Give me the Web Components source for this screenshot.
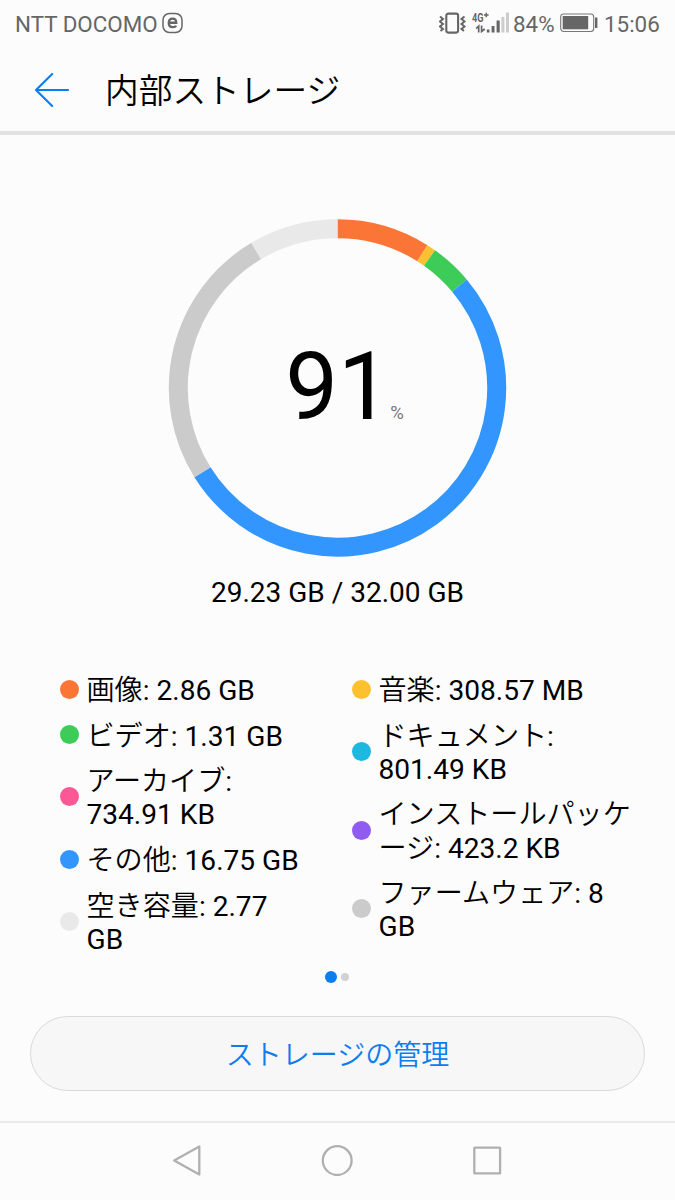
<!DOCTYPE html>
<html lang="ja">
<head>
<meta charset="utf-8">
<title>内部ストレージ</title>
<style>
html,body{margin:0;height:100%;background:#fcfcfc}
body{font-family:Roboto,"Noto Sans CJK JP DemiLight","Noto Sans CJK JP",sans-serif;color:#000;overflow:hidden}
</style>
</head>
<body>
<storage-screen></storage-screen>
<script>
const define = (name, html, setup) => customElements.define(name, class extends HTMLElement {
  constructor() {
    super();
    this.attachShadow({mode: 'open'}).innerHTML = html;
  }
  connectedCallback() { if (setup) setup(this, this.shadowRoot); }
});

define('status-bar', `
<style>
:host{display:flex;box-sizing:border-box;height:46px;padding:0 15px;align-items:center;justify-content:space-between;color:#666;font-size:22.4px;line-height:44px;white-space:nowrap}
.left,.right{display:flex;align-items:center}
.left{gap:4px}
svg{display:block;flex:none}
span{padding-top:1px}
.carrier{width:143px}
.pct{width:41px;margin-left:4px}
.bat{margin-left:6px}
.time{width:56px;margin-left:6px}
</style>
<div class="left"><span class="carrier">NTT DOCOMO</span>
<svg width="21" height="22" viewBox="0 0 21 22" fill="none" stroke="#666"><rect x="1" y="1.5" width="19" height="19" rx="6.5" stroke-width="1.5"/><path d="M6.5 10.8H14.2C14.2 7.7 13 6.6 10.5 6.6S6.8 8.2 6.8 11S8 15.1 10.6 15.1S13.5 14.8 14 13.6" stroke-width="2.4"/></svg></div>
<div class="right">
<svg width="27" height="22" viewBox="0 0 27 22" fill="none" stroke="#666"><rect x="7.3" y="1.6" width="11.8" height="19" rx="2" stroke-width="2.1"/><path d="M1 4.5L4 7L1 9.5L4 12L1 14.5L4 17L1.5 19M25.5 4.5L22.5 7L25.5 9.5L22.5 12L25.5 14.5L22.5 17L25 19" stroke-width="2"/></svg>
<svg width="38" height="24" viewBox="0 0 38 24" style="margin-left:5px" fill="#666"><text x="1" y="10.6" font-size="12.5" font-weight="700" textLength="11.5" lengthAdjust="spacingAndGlyphs">4G</text><path d="M13 4h4.6M15.3 1.7v4.6" stroke="#666" stroke-width="1.5"/><path d="M5.2 17.6L7.7 15V21.5M10.6 14.5V20.5L13.8 18" stroke="#666" stroke-width="1.7" fill="none"/><path d="M15.8 18.6h2.7v2.8h-2.7zM20.6 15h2.9v6.4h-2.9zM25.6 9.5h3.1v11.9h-3.1z"/><path fill="#ccc" d="M30.4 6h3v15.4h-3zM35 1.5h3v19.9h-3z"/></svg>
<span class="pct">84%</span>
<svg class="bat" width="38" height="20" viewBox="0 0 38 20"><rect x=".7" y="1" width="33" height="17.5" rx="3" fill="none" stroke="#777" stroke-width="1.1"/><rect x="2.7" y="3" width="25.5" height="13.3" fill="#666"/><rect x="35" y="4.5" width="2.4" height="10.5" fill="#666"/></svg>
<span class="time">15:06</span></div>`);

define('app-bar', `
<style>
:host{display:flex;box-sizing:border-box;height:89px;padding-left:34px;align-items:center;border-bottom:4px solid #e2e2e2;font-size:33.7px;line-height:48px}
svg{display:block;flex:none;margin:2px 37px 0 0}
span{padding-top:6px;margin-left:-1px}
</style>
<svg width="35" height="36" viewBox="0 0 35 36" fill="none" stroke="#0a7df0" stroke-width="2.1" stroke-linecap="round" stroke-linejoin="round"><path d="M18.2 2L2 18L18.2 34M2 18H34"/></svg>
<span><slot></slot></span>`);

define('usage-ring', `
<style>
:host{display:grid;width:338px;height:338px;margin-left:168px}
svg,.value{grid-area:1/1}
.value{display:flex;justify-content:center;align-items:baseline;align-self:center;line-height:112px;padding:23px 0 0 14px}
.num{font-size:94px}
.unit{font-size:18.5px;color:#777;margin-left:-.5px}
</style>
<svg width="339" height="338" viewBox="0 0 339 338" fill="none" stroke-width="19"></svg>
<div class="value"><span class="num"><slot></slot></span><span class="unit">%</span></div>`,
(host, root) => {
  const segments = [[0,32.2,'#fb7537'],[32.2,35.3,'#fdc02f'],[35.3,50,'#3ccc57'],[50,238,'#3396fe'],[238,329.3,'#cbcbcb'],[329.3,360,'#e9e9e9']];
  const point = d => {
    const a = d * Math.PI / 180;
    return (169.5 + 159.2 * Math.sin(a)).toFixed(3) + ' ' + (168.9 - 159.2 * Math.cos(a)).toFixed(3);
  };
  root.querySelector('svg').innerHTML = segments.map(([from, to, color]) =>
    `<path stroke="${color}" d="M${point(from)}A159.2 159.2 0 ${to - from > 180 ? 1 : 0} 1 ${point(to)}"/>`).join('');
});

define('legend-item', `
<style>
:host{display:grid;grid-template-columns:19px auto;column-gap:7.5px;align-items:center;justify-content:start;font-size:28.1px;line-height:33.2px;white-space:nowrap}
i{width:19px;height:19px;border-radius:50%;background:var(--dot);position:relative;top:-.5px}
span{margin:1px 0 -1px}
</style>
<i></i><span><slot></slot></span>`,
(host) => host.style.setProperty('--dot', host.getAttribute('color')));

define('page-dots', `
<style>
:host{display:flex;align-items:center;justify-content:center;gap:4px;height:12px}
i{width:8px;height:8px;border-radius:50%;background:#d2d2d2}
i.on{width:12px;height:12px;background:#0a7df0}
</style><i class="on"></i><i></i>`);

define('pill-button', `
<style>
:host{display:block}
button{display:block;box-sizing:border-box;width:100%;height:75px;border:1px solid #dadada;border-radius:38px;background:#f7f7f7;color:#0a7df0;font:inherit;font-size:28px;line-height:40px;padding:5px 0 0}
</style><button><slot></slot></button>`);

define('nav-bar', `
<style>
:host{display:flex;box-sizing:border-box;height:79px;border-top:2px solid #e9e9e9;padding:0 1px 3px 0;justify-content:center;align-items:center;gap:118px}
svg{display:block;fill:none;stroke:#b0b0b0;stroke-width:2.3;stroke-linejoin:round}
</style>
<svg width="32" height="32" viewBox="0 -.6 32 32"><path d="M28.3 1.9V30L3.2 16Z"/></svg>
<svg width="32" height="32" viewBox="0 -.6 32 32"><circle cx="16.2" cy="16" r="14.4"/></svg>
<svg width="32" height="32" viewBox="0 -.6 32 32"><rect x="3.3" y="3" width="25.8" height="25.8" rx=".5"/></svg>`);

define('storage-screen', `
<style>
:host{display:flex;flex-direction:column;width:675px;height:1200px;background:#fcfcfc}
main{flex:1;display:flex;flex-direction:column;min-height:0}
usage-ring{margin-top:84px}
.total{text-align:center;font-size:28px;line-height:34px;margin-top:19px}
.legend{display:grid;grid-template-columns:256px 256px;column-gap:36px;padding-left:60px;margin-top:63px;align-items:start;height:280px}
.col{display:flex;flex-direction:column;gap:12.4px}
page-dots{margin:18px 1px 0 0}
pill-button{margin:33px 30px 0}
</style>
<status-bar></status-bar>
<app-bar>内部ストレージ</app-bar>
<main>
<usage-ring>91</usage-ring>
<div class="total">29.23 GB / 32.00 GB</div>
<div class="legend">
<div class="col">
<legend-item color="#fb7537">画像: 2.86 GB</legend-item>
<legend-item color="#3ccc57">ビデオ: 1.31 GB</legend-item>
<legend-item color="#fc5896">アーカイブ:<br>734.91 KB</legend-item>
<legend-item color="#3396fe">その他: 16.75 GB</legend-item>
<legend-item color="#e9e9e9">空き容量: 2.77<br>GB</legend-item>
</div>
<div class="col">
<legend-item color="#fdc02f">音楽: 308.57 MB</legend-item>
<legend-item color="#1cb8e0">ドキュメント:<br>801.49 KB</legend-item>
<legend-item color="#8f5bf0">インストールパッケ<br>ージ: 423.2 KB</legend-item>
<legend-item color="#cbcbcb">ファームウェア: 8<br>GB</legend-item>
</div>
</div>
<page-dots></page-dots>
<pill-button>ストレージの管理</pill-button>
</main>
<nav-bar></nav-bar>`);
</script>
</body>
</html>
